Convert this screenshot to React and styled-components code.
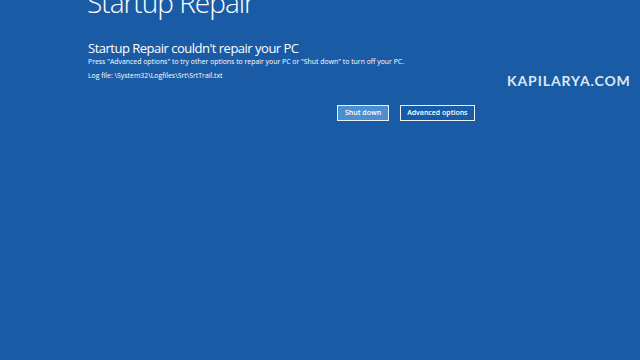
import React from 'react';
import styled, {createGlobalStyle} from 'styled-components';

const GlobalStyle = createGlobalStyle`
  html, body {
    margin: 0;
    padding: 0;
    background: #1a5ba6;
  }
  body {
    font-family: "Open Sans", "Noto Sans", sans-serif;
    color: #fff;
  }
`;

const Screen = styled.div`
  width: 640px;
  height: 360px;
  overflow: hidden;
  background: #1a5ba6;
  position: relative;
  padding-left: 88px;
  box-sizing: border-box;
`;

const Title = styled.h1`
  margin: -12px 0 0 -1px;
  font-size: 28px;
  font-weight: 300;
  line-height: 28px;
  letter-spacing: -1px;
  color: #fff;
`;

const Heading = styled.h2`
  margin: 24px 0 0;
  font-size: 13px;
  font-weight: 400;
  line-height: 16px;
  letter-spacing: -0.5px;
  color: #fff;
`;

const Info = styled.p`
  margin: ${p => p.$top || 0}px 0 0;
  font-size: 6.9px;
  line-height: 9px;
  color: #fff;
`;

const Actions = styled.div`
  display: flex;
  gap: 11px;
  margin: 25px 0 0 249px;
`;

const Button = styled.button`
  height: 16px;
  padding: 0 ${p => p.$pad}px;
  border: 1px solid #e8f0f8;
  background: ${p => p.$primary ? '#4a8fd0' : '#1a5ba6'};
  color: #fff;
  font-family: "Open Sans", "Noto Sans", sans-serif;
  font-size: 7px;
  font-weight: 600;
  line-height: 14px;
  box-sizing: border-box;
  cursor: default;
`;

const Watermark = styled.div`
  position: absolute;
  left: 507px;
  top: 72px;
  font-family: Lato, "Noto Sans", sans-serif;
  font-size: 14px;
  font-weight: 700;
  letter-spacing: 0.9px;
  color: #dce8f6;
`;

export default function App() {
  return (
    <Screen>
      <GlobalStyle/>
      <Title>Startup Repair</Title>
      <Heading>Startup Repair couldn't repair your PC</Heading>
      <Info $top={1}>Press "Advanced options" to try other options to repair your PC or "Shut down" to turn off your PC.</Info>
      <Info $top={5}>Log file: \System32\Logfiles\Srt\SrtTrail.txt</Info>
      <Actions>
        <Button $primary $pad={7}>Shut down</Button>
        <Button $pad={6}>Advanced options</Button>
      </Actions>
      <Watermark>KAPILARYA.COM</Watermark>
    </Screen>
  );
}
